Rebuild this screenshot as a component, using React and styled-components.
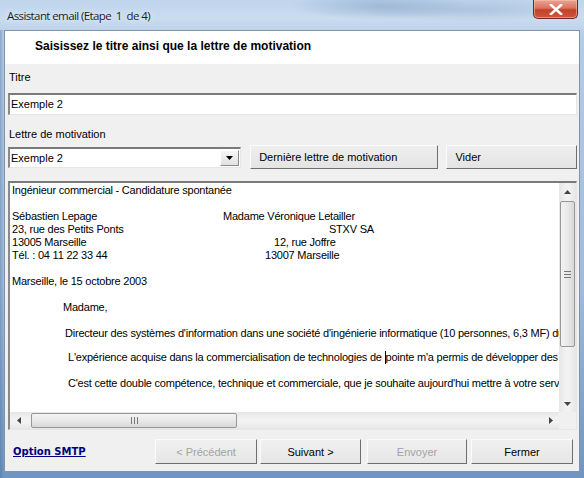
import React from 'react';
import styled, { createGlobalStyle } from 'styled-components';

const GlobalStyle = createGlobalStyle`
    html, body {
        margin: 0;
        padding: 0;
        width: 584px;
        height: 478px;
        overflow: hidden;
    }
    body {
        font-family: "Liberation Sans", Arial, sans-serif;
        font-size: 11px;
        color: #000;
    }
`;

const LETTER = [
    { text: 'Ingénieur commercial - Candidature spontanée' },
    { blank: true },
    { text: 'Sébastien Lepage', right: 'Madame Véronique Letailler', pad: 0 },
    { text: '23, rue des Petits Ponts', right: 'STXV SA', pad: 106 },
    { text: '13005 Marseille', right: '12, rue Joffre', pad: 51 },
    { text: 'Tél. : 04 11 22 33 44', right: '13007 Marseille', pad: 42 },
    { blank: true },
    { text: 'Marseille, le 15 octobre 2003' },
    { blank: true },
    { text: 'Madame,', indent: 51 },
    { blank: true },
    { text: "Directeur des systèmes d'information dans une société d'ingénierie informatique (10 personnes, 6,3 MF) durant 8 ans,", indent: 53 },
    { blank: true, short: true },
    { text: "L'expérience acquise dans la commercialisation de technologies de ", caret: "pointe m'a permis de développer des", indent: 56 },
    { blank: true },
    { text: "C'est cette double compétence, technique et commerciale, que je souhaite aujourd'hui mettre à votre service.", indent: 56 },
];

export default function App() {
    return <>
        <GlobalStyle />
        <Window>
            <TitleBar>
                <Caption>Assistant email (Etape&nbsp; 1&nbsp; de 4)</Caption>
                <CloseButton>
                    <svg width="14" height="11" viewBox="0 0 14 11">
                        <path d="M2 1 L12 10 M12 1 L2 10" stroke="#fff" strokeWidth="2.6" strokeLinecap="square" />
                    </svg>
                </CloseButton>
            </TitleBar>

            <Client>
                <Header>Saisissez le titre ainsi que la lettre de motivation</Header>

                <Body>
                    <Label $bottom={9}>Titre</Label>
                    <TextInput>Exemple 2</TextInput>

                    <Label $top={13} $bottom={4}>Lettre de motivation</Label>
                    <ComboRow>
                        <Combo>
                            <ComboValue>Exemple 2</ComboValue>
                            <ComboArrow>
                                <svg width="7" height="4" viewBox="0 0 7 4"><path d="M0 0 H7 L3.5 4 Z" fill="#000" /></svg>
                            </ComboArrow>
                        </Combo>
                        <Button $width={189}>Dernière lettre de motivation</Button>
                        <Button $width={131}>Vider</Button>
                    </ComboRow>

                    <Memo>
                        <MemoText>
                            {LETTER.map((line, i) => line.blank
                                ? <Line key={i} $short={line.short}>&nbsp;</Line>
                                : <Line key={i} $indent={line.indent}>
                                    {line.right !== undefined
                                        ? <>
                                            <LeftCell>{line.text}</LeftCell>
                                            <RightCell $pad={line.pad}>{line.right}</RightCell>
                                        </>
                                        : <>
                                            {line.text}
                                            {line.caret && <><Caret />{line.caret}</>}
                                        </>}
                                </Line>)}
                        </MemoText>
                        <VScroll>
                            <ArrowBox>
                                <svg width="7" height="4" viewBox="0 0 7 4"><path d="M0 4 H7 L3.5 0 Z" fill="#444" /></svg>
                            </ArrowBox>
                            <VTrack>
                                <VThumb><GripV /></VThumb>
                            </VTrack>
                            <ArrowBox>
                                <svg width="7" height="4" viewBox="0 0 7 4"><path d="M0 0 H7 L3.5 4 Z" fill="#444" /></svg>
                            </ArrowBox>
                        </VScroll>
                        <HScroll>
                            <ArrowBox>
                                <svg width="4" height="7" viewBox="0 0 4 7"><path d="M4 0 V7 L0 3.5 Z" fill="#444" /></svg>
                            </ArrowBox>
                            <HTrack>
                                <HThumb><GripH /></HThumb>
                            </HTrack>
                            <ArrowBox>
                                <svg width="4" height="7" viewBox="0 0 4 7"><path d="M0 0 V7 L4 3.5 Z" fill="#444" /></svg>
                            </ArrowBox>
                        </HScroll>
                        <Corner />
                    </Memo>
                </Body>

                <Footer>
                    <SmtpLink>Option SMTP</SmtpLink>
                    <FooterButtons>
                        <WizardButton disabled $width={102}>&lt; Précédent</WizardButton>
                        <WizardButton $width={101} $gap={3}>Suivant &gt;</WizardButton>
                        <WizardButton disabled $width={100} $gap={6}>Envoyer</WizardButton>
                        <WizardButton $width={102} $gap={4}>Fermer</WizardButton>
                    </FooterButtons>
                </Footer>
            </Client>
        </Window>
    </>
}

const Window = styled.div`
    width: 584px;
    height: 478px;
    display: flex;
    flex-direction: column;
    background:
        linear-gradient(90deg, rgba(60, 100, 150, 0.35) 0, rgba(60, 100, 150, 0) 4px),
        linear-gradient(180deg, #c5d9ef 0%, #b4cce6 8%, #9fbbdc 60%, #6f95c0 100%);
    box-sizing: border-box;
`;

const TitleBar = styled.div`
    height: 30px;
    flex: none;
    display: flex;
    align-items: flex-start;
    justify-content: space-between;
    padding-left: 7px;
    padding-right: 6px;
    background:
        radial-gradient(ellipse 90px 14px at 380px 6px, rgba(120, 150, 190, 0.45), rgba(120, 150, 190, 0)),
        radial-gradient(ellipse 110px 12px at 470px 10px, rgba(140, 165, 200, 0.4), rgba(140, 165, 200, 0)),
        linear-gradient(180deg, #bfd5ec 0%, #c9dcf0 60%, #bed3ea 100%);
`;

const Caption = styled.div`
    font-family: "Open Sans", "Noto Sans", sans-serif;
    font-size: 11.5px;
    letter-spacing: -0.6px;
    color: #1e1e1e;
    margin-top: 8px;
    text-shadow: 0 0 6px rgba(255, 255, 255, 0.9);
`;

const CloseButton = styled.div`
    width: 45px;
    height: 19px;
    box-sizing: border-box;
    display: flex;
    align-items: center;
    justify-content: center;
    border: 1px solid #6a2a22;
    border-top: none;
    border-radius: 0 0 5px 5px;
    background: linear-gradient(180deg, #e8a593 0%, #d9735e 45%, #c4402a 55%, #d0563c 100%);
    box-shadow: inset 0 0 0 1px rgba(255, 200, 190, 0.5);
`;

const Client = styled.div`
    flex: 1;
    margin: 0 4px 6px 4px;
    display: flex;
    flex-direction: column;
    background: #f0f0f0;
    border: 1px solid #7f93aa;
    min-height: 0;
`;

const Header = styled.div`
    height: 33px;
    flex: none;
    box-sizing: border-box;
    padding: 8px 0 0 30px;
    background: #fff;
    font-family: "Liberation Sans", Arial, sans-serif;
    font-weight: bold;
    font-size: 12px;
`;

const Body = styled.div`
    display: flex;
    flex-direction: column;
    padding: 7px 2px 0 3px;
`;

const Label = styled.div`
    height: 13px;
    line-height: 13px;
    margin-top: ${p => p.$top || 0}px;
    margin-bottom: ${p => p.$bottom}px;
    padding-left: 1px;
`;

const sunken = `
    box-sizing: border-box;
    background: #fff;
    border-style: solid;
    border-width: 2px 1px 1px 2px;
    border-color: #7a7a7a #e6e6e6 #e6e6e6 #8a8a8a;
`;

const TextInput = styled.div`
    ${sunken}
    height: 22px;
    line-height: 18px;
    padding-left: 1px;
`;

const ComboRow = styled.div`
    display: flex;
    align-items: center;
    gap: 8px;
`;

const Combo = styled.div`
    ${sunken}
    width: 234px;
    height: 21px;
    display: flex;
    align-items: stretch;
    margin-right: 1px;
`;

const ComboValue = styled.div`
    flex: 1;
    line-height: 18px;
    padding-left: 1px;
`;

const ComboArrow = styled.div`
    width: 17px;
    margin: 1px;
    display: flex;
    align-items: center;
    justify-content: center;
    background: linear-gradient(180deg, #f6f6f6, #e2e2e2);
    border: 1px solid;
    border-color: #fff #8a8a8a #8a8a8a #fff;
`;

const Button = styled.div`
    width: ${p => p.$width}px;
    height: 24px;
    box-sizing: border-box;
    display: flex;
    align-items: center;
    padding-left: 8px;
    background: linear-gradient(180deg, #efefef, #e4e4e4);
    border: 1px solid;
    border-color: #fbfbfb #6e6e6e #6e6e6e #fbfbfb;
`;

const Memo = styled.div`
    ${sunken}
    margin-top: 12px;
    height: 249px;
    display: grid;
    grid-template-columns: 1fr 17px;
    grid-template-rows: 1fr 17px;
    overflow: hidden;
`;

const MemoText = styled.div`
    padding: 1px 0 0 2px;
    overflow: hidden;
    white-space: pre;
    letter-spacing: -0.22px;
`;

const Line = styled.div`
    height: ${p => p.$short ? 11 : 13}px;
    line-height: 13px;
    padding-left: ${p => p.$indent || 0}px;
    display: flex;
`;

const LeftCell = styled.span`
    width: 211px;
    flex: none;
`;

const RightCell = styled.span`
    padding-left: ${p => p.$pad}px;
`;

const Caret = styled.span`
    display: inline-block;
    width: 1px;
    height: 13px;
    background: #000;
`;

const VScroll = styled.div`
    display: flex;
    flex-direction: column;
    background: linear-gradient(90deg, #e6e6e6, #f2f2f2 40%, #f2f2f2 60%, #e6e6e6);
`;

const HScroll = styled.div`
    display: flex;
    background: linear-gradient(180deg, #e6e6e6, #f2f2f2 40%, #f2f2f2 60%, #e6e6e6);
`;

const ArrowBox = styled.div`
    width: 17px;
    height: 17px;
    flex: none;
    display: flex;
    align-items: center;
    justify-content: center;
`;

const VTrack = styled.div`
    flex: 1;
    padding-top: 1px;
`;

const HTrack = styled.div`
    flex: 1;
    padding-left: 4px;
`;

const thumb = `
    box-sizing: border-box;
    border: 1px solid #979797;
    border-radius: 2px;
    display: flex;
    align-items: center;
    justify-content: center;
`;

const VThumb = styled.div`
    ${thumb}
    height: 146px;
    margin: 0 1px;
    background: linear-gradient(90deg, #f3f3f3, #e9e9e9 50%, #d8d8d8);
`;

const HThumb = styled.div`
    ${thumb}
    width: 206px;
    height: 15px;
    margin-top: 1px;
    background: linear-gradient(180deg, #f3f3f3, #e9e9e9 50%, #d8d8d8);
`;

const GripV = styled.div`
    width: 7px;
    height: 7px;
    background: repeating-linear-gradient(180deg, #777 0 1px, transparent 1px 3px);
`;

const GripH = styled.div`
    width: 7px;
    height: 7px;
    background: repeating-linear-gradient(90deg, #777 0 1px, transparent 1px 3px);
`;

const Corner = styled.div`
    background: #f0f0f0;
`;

const Footer = styled.div`
    display: flex;
    align-items: center;
    justify-content: space-between;
    padding: 9px 6px 0 8px;
`;

const SmtpLink = styled.a`
    font-family: "DejaVu Sans", Verdana, sans-serif;
    font-weight: bold;
    font-size: 10px;
    color: #000080;
    text-decoration: underline;
`;

const FooterButtons = styled.div`
    display: flex;
`;

const WizardButton = styled.div`
    width: ${p => p.$width}px;
    height: 25px;
    box-sizing: border-box;
    margin-left: ${p => p.$gap || 0}px;
    display: flex;
    align-items: center;
    justify-content: center;
    color: ${p => p.disabled ? '#a3a3a3' : '#000'};
    background: linear-gradient(180deg, #f0f0f0, #e6e6e6);
    border: 1px solid;
    border-color: #fbfbfb #6e6e6e #6e6e6e #fbfbfb;
    font-size: 11px;
`;
